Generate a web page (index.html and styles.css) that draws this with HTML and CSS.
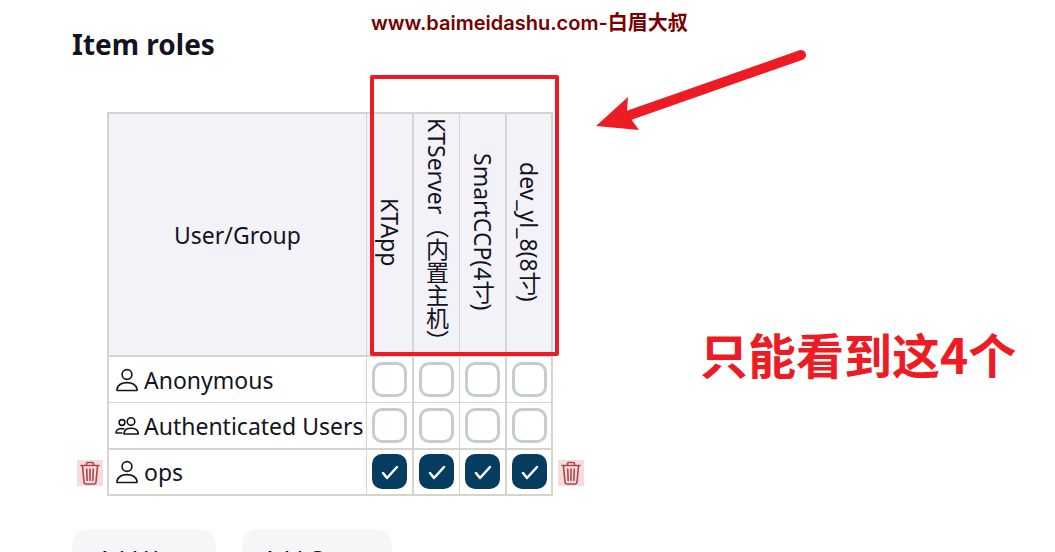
FILE: index.html
```
<!DOCTYPE html>
<html lang="en">
<head>
<meta charset="utf-8">
<title>Item roles</title>
<link rel="stylesheet" href="styles.css">
</head>
<body>
<svg class="defs" aria-hidden="true">
  <symbol id="person" viewBox="0 0 24 24"><circle cx="12" cy="6.500" r="4.900"/><path d="M2 22.500V21C3 17 7 14.600 12 14.600S21 17 22 21V22.500Z"/></symbol>
  <symbol id="people" viewBox="0 0 24 24"><circle cx="16" cy="7.500" r="3.800"/><circle cx="7" cy="8.500" r="2.900"/><path d="M9 20V19C9.500 16.300 12 14.300 16 14.300S22.700 16.300 23.200 19V20Z"/><path d="M7.500 19H1C1 16.300 3.500 14.500 7 14.500L9.500 15"/></symbol>
  <symbol id="trash" viewBox="0 0 26 26"><path d="M4 5.500H22M9.500 5V3.500Q9.500 2.500 10.500 2.500H15.500Q16.500 2.500 16.500 3.500V5M5.500 6L7 22Q7.200 24 9 24H17Q18.800 24 19 22L20.500 6M9.700 9L10.200 20.500M13 9V20.500M16.300 9L15.800 20.500"/></symbol>
</svg>
<main class="page">
  <h1 class="title">Item roles</h1>
  <table class="matrix">
    <thead>
      <tr>
        <td class="edge"></td>
        <th class="name head" scope="col">User/Group</th>
        <th class="role thick" scope="col"><span class="vertical">KTApp</span></th>
        <th class="role" scope="col"><span class="vertical">KTServer（内置主机）</span></th>
        <th class="role thick" scope="col"><span class="vertical">SmartCCP(4寸)</span></th>
        <th class="role thick" scope="col"><span class="vertical">dev_yl_8(8寸)</span></th>
        <td class="side"></td>
      </tr>
    </thead>
    <tbody>
      <tr class="thin">
        <td class="edge"></td>
        <th class="name" scope="row"><span class="user"><svg class="icon"><use href="#person"/></svg>Anonymous</span></th>
        <td class="cell thick"><input class="check" type="checkbox" aria-label="Anonymous, KTApp"></td>
        <td class="cell"><input class="check" type="checkbox" aria-label="Anonymous, KTServer"></td>
        <td class="cell thick"><input class="check" type="checkbox" aria-label="Anonymous, SmartCCP"></td>
        <td class="cell thick last"><input class="check" type="checkbox" aria-label="Anonymous, dev_yl_8"></td>
        <td class="side"></td>
      </tr>
      <tr>
        <td class="edge"></td>
        <th class="name" scope="row"><span class="user"><svg class="icon"><use href="#people"/></svg>Authenticated Users</span></th>
        <td class="cell thick"><input class="check" type="checkbox" aria-label="Authenticated Users, KTApp"></td>
        <td class="cell"><input class="check" type="checkbox" aria-label="Authenticated Users, KTServer"></td>
        <td class="cell thick"><input class="check" type="checkbox" aria-label="Authenticated Users, SmartCCP"></td>
        <td class="cell thick last"><input class="check" type="checkbox" aria-label="Authenticated Users, dev_yl_8"></td>
        <td class="side"></td>
      </tr>
      <tr class="bottom">
        <td class="edge"><button class="delete" type="button" aria-label="Remove ops"><svg class="bin"><use href="#trash"/></svg></button></td>
        <th class="name" scope="row"><span class="user"><svg class="icon"><use href="#person"/></svg>ops</span></th>
        <td class="cell thick"><input class="check" type="checkbox" checked aria-label="ops, KTApp"></td>
        <td class="cell"><input class="check" type="checkbox" checked aria-label="ops, KTServer"></td>
        <td class="cell thick"><input class="check" type="checkbox" checked aria-label="ops, SmartCCP"></td>
        <td class="cell thick last"><input class="check" type="checkbox" checked aria-label="ops, dev_yl_8"></td>
        <td class="side"><button class="delete" type="button" aria-label="Remove ops"><svg class="bin"><use href="#trash"/></svg></button></td>
      </tr>
    </tbody>
  </table>
  <div class="actions">
    <button class="add" type="button">Add User</button>
    <button class="add" type="button">Add Group</button>
  </div>
</main>
<div class="watermark">www.baimeidashu.com-白眉大叔</div>
<div class="frame"></div>
<svg class="arrow" viewBox="0 0 216 84" aria-hidden="true"><path d="M205 10L34 70" stroke="#ed1c24" stroke-width="10" stroke-linecap="round"/><path d="M0 81L32 52L31 66L35 74L43 85Z" fill="#ed1c24"/></svg>
<div class="note">只能看到这4个</div>
</body>
</html>
```
FILE: styles.css
```
* { box-sizing: border-box; }
body {
  margin: 0;
  height: 100vh;
  overflow: hidden;
  position: relative;
  background: #fff;
  color: #14141f;
  font: 23px/32px "Noto Sans", "Noto Sans CJK SC", sans-serif;
}
.defs { display: none; }
.page { padding: 27px 72px; }
.title { margin: 0 0 51px; font-size: 28px; line-height: 34px; font-weight: 700; }
.matrix { margin-left: 5px; border-collapse: separate; border-spacing: 0; }
.matrix td, .matrix th { padding: 0; font-weight: 400; }
.matrix .edge { width: 32px; border-right: 2px solid #d4d5cd; text-align: left; }
.matrix .side { width: 31px; padding-left: 5px; }
.matrix .name, .matrix .role, .matrix .cell {
  border-right: 1px solid #d4d5cd;
  border-bottom: 2px solid #d4d5cd;
}
.matrix .thick { border-right-width: 2px; }
.matrix .thin .name, .matrix .thin .cell { border-bottom-width: 1px; }
.matrix .name { width: 258px; text-align: left; }
.matrix .head, .matrix .role { height: 245px; border-top: 2px solid #d4d5cd; background: #f3f2f8; }
.matrix .head { text-align: center; }
.matrix .role { padding-top: 4px; text-align: center; vertical-align: top; }
.vertical { writing-mode: vertical-rl; display: block; height: 228px; margin: 0 auto; width: 32px; white-space: nowrap; }
.user { display: flex; align-items: center; gap: 5px; padding-left: 6px; white-space: nowrap; }
.icon { width: 24px; height: 24px; fill: none; stroke: #14141f; stroke-width: 1.600; stroke-linejoin: round; }
.check {
  appearance: none;
  display: block;
  width: 35px;
  height: 35px;
  margin: 5px;
  border: 3px solid #c3cdd2;
  border-radius: 10px;
  background: #fff;
}
.last .check { margin-right: 4px; }
.bottom .check { margin-top: 4px; }
.check:checked {
  border: 0;
  background: #063c5f url("data:image/svg+xml,%3Csvg xmlns='http://www.w3.org/2000/svg' viewBox='0 0 35 35'%3E%3Cpath d='M11 19L15 24L25 13' fill='none' stroke='white' stroke-width='2.500' stroke-linecap='round' stroke-linejoin='round'/%3E%3C/svg%3E") center / 35px 35px no-repeat;
}
.delete { display: block; width: 26px; height: 26px; padding: 0; border: 0; background: #f3dcdf; }
.bin { display: block; width: 26px; height: 26px; fill: none; stroke: #b04548; stroke-width: 1.600; stroke-linecap: round; }
.actions { display: flex; gap: 26px; margin-top: 33px; }
.add { min-width: 144px; padding: 16px 21px; border: 0; border-radius: 16px; background: #f6f6f9; color: #14141f; font: 500 21px/28px "Noto Sans", sans-serif; }
.watermark { position: absolute; left: 371px; top: 10px; color: #780000; font: 600 20px/26px Inter, "Noto Sans CJK SC", sans-serif; white-space: nowrap; }
.frame { position: absolute; left: 370px; top: 75px; width: 189px; height: 281px; border: 4px solid #ed1c24; border-radius: 2px; }
.arrow { position: absolute; left: 596px; top: 45px; width: 216px; height: 84px; overflow: visible; }
.note { position: absolute; left: 700px; top: 317px; color: #ed1c24; font: 700 48px/72px "Noto Sans CJK SC", sans-serif; white-space: nowrap; }
```
